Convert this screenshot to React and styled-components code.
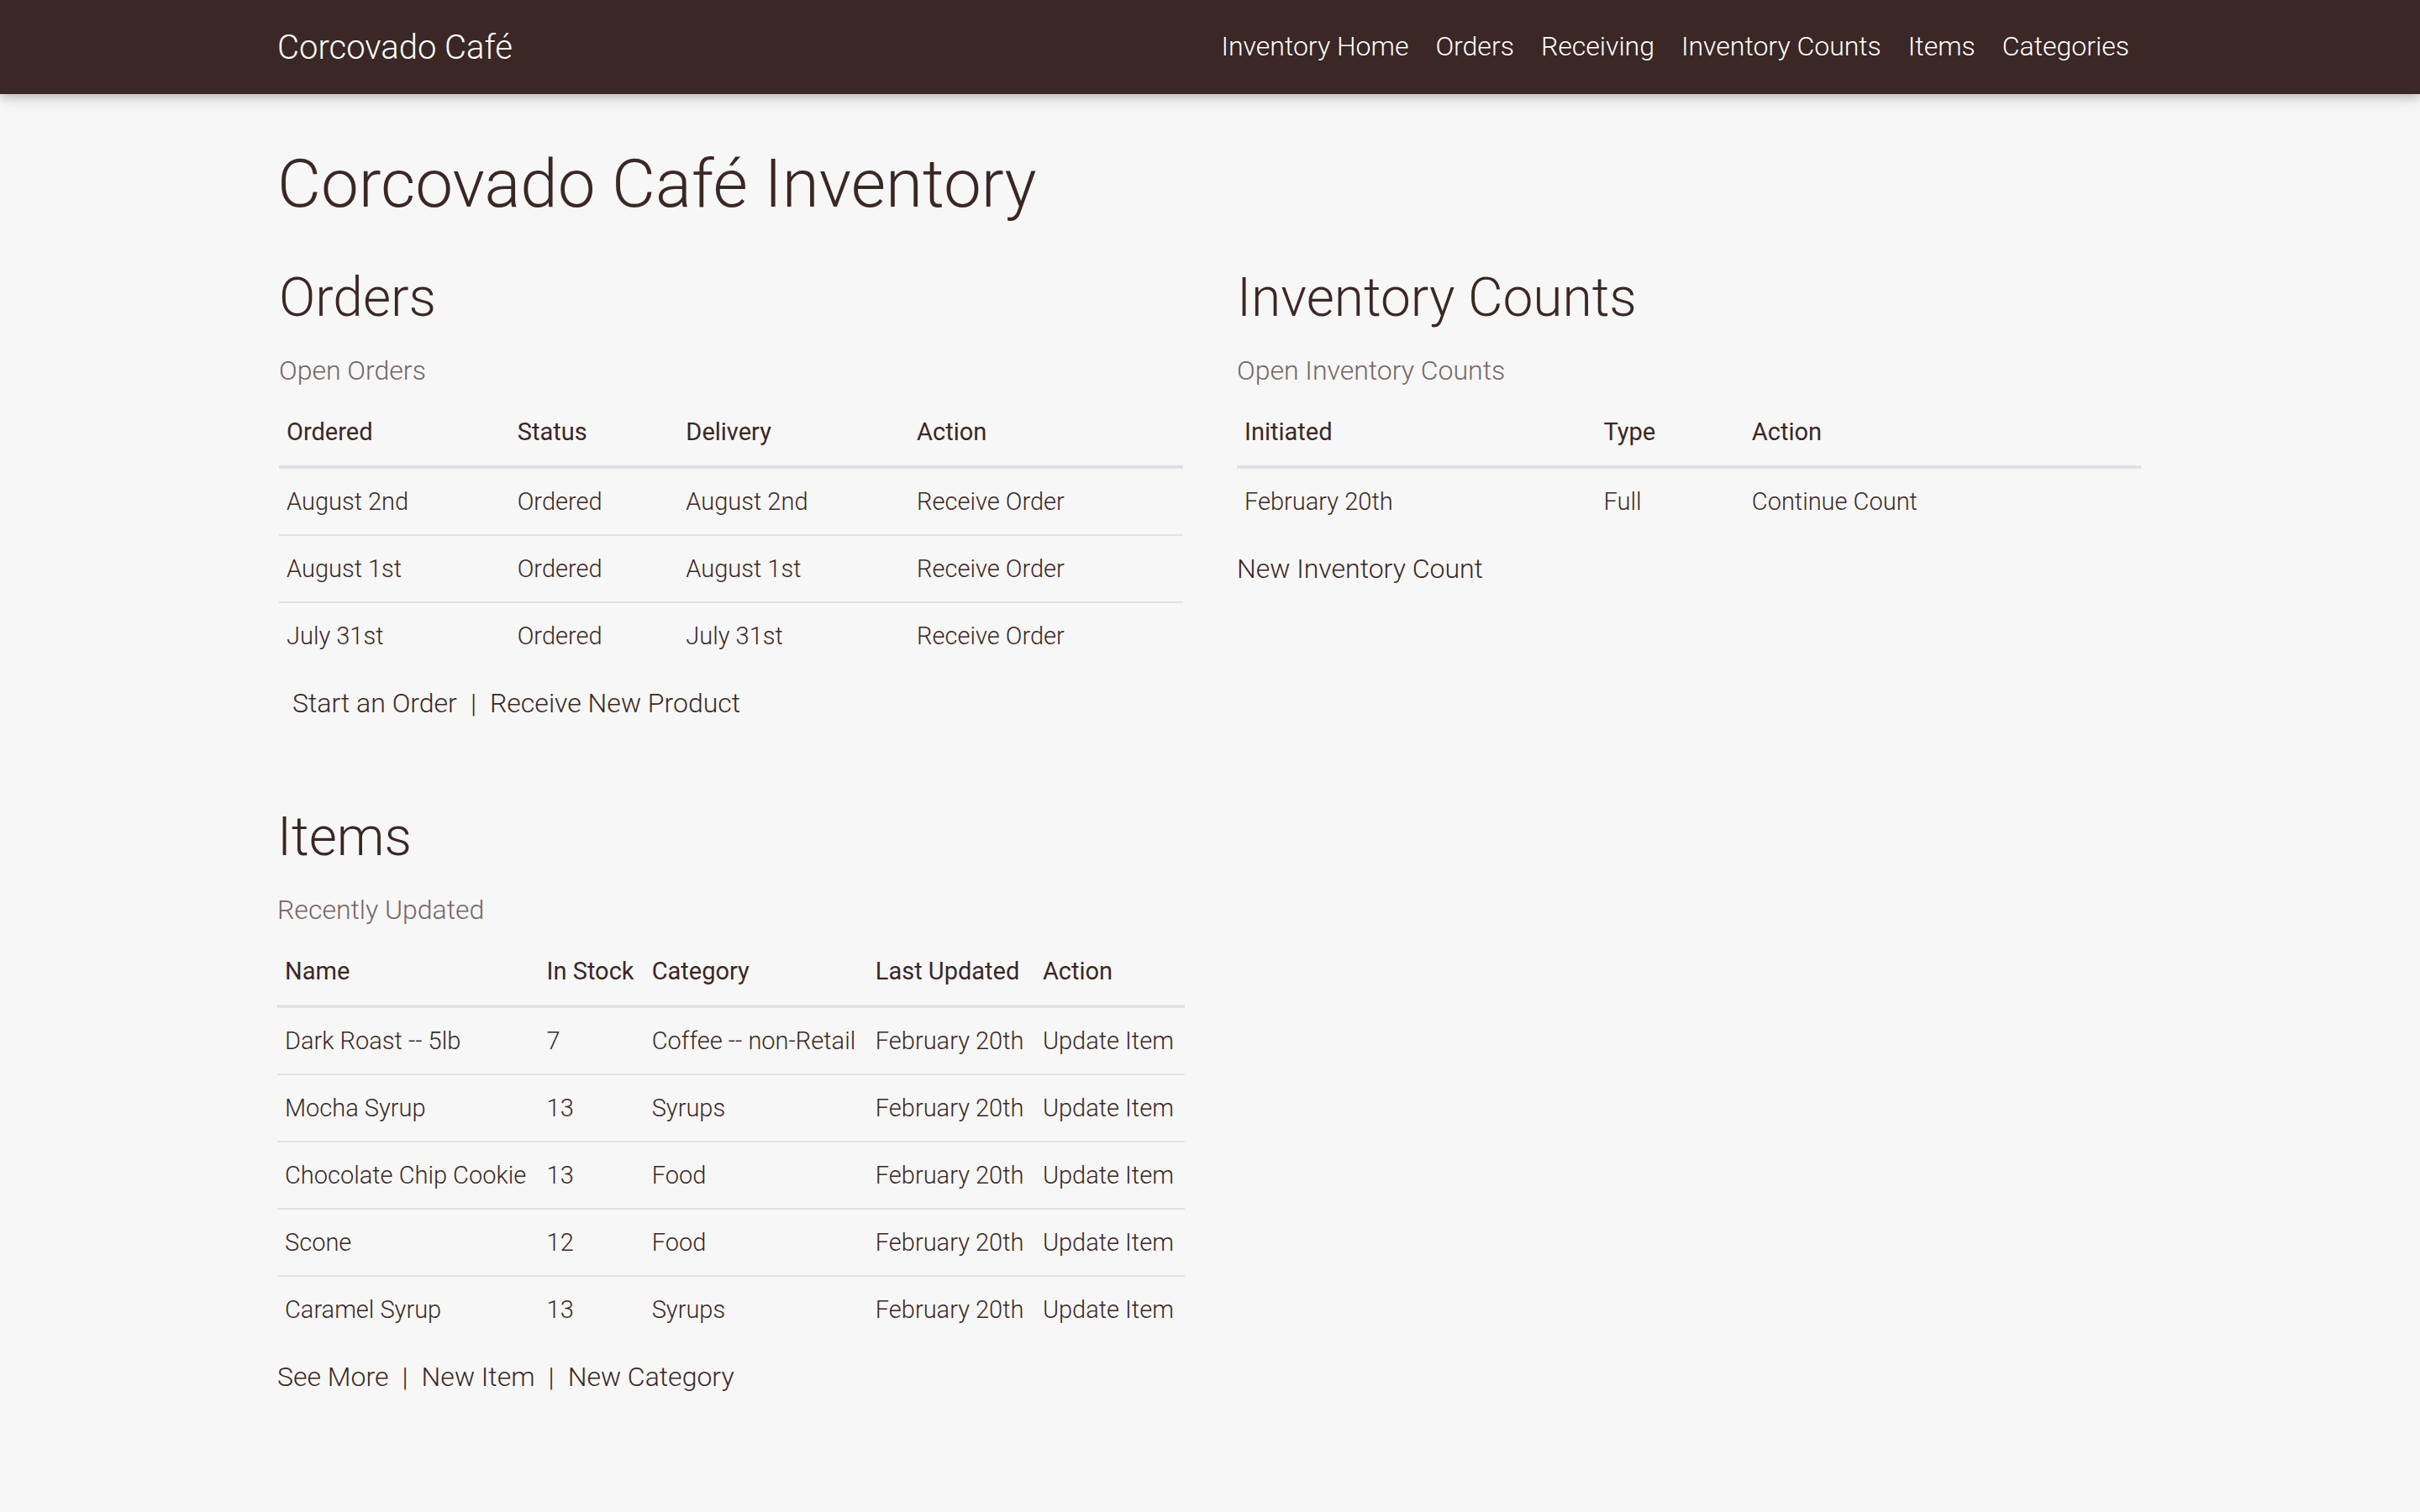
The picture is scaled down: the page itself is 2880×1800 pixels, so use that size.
import React from "react";
import styled, { createGlobalStyle } from "styled-components";

const brown = "#3b2725";
const line = "#dee2e6";

const GlobalStyle = createGlobalStyle`
  *, *::before, *::after { box-sizing: border-box; }
  body {
    margin: 0;
    background: #f7f7f7;
    color: ${brown};
    font-family: Roboto, "Liberation Sans", sans-serif;
    font-size: 32px;
    font-weight: 300;
    line-height: 48px;
  }
`;

const Navbar = styled.header`
  background: ${brown};
  box-shadow: 0 4px 10px rgba(0, 0, 0, 0.16), 0 4px 20px rgba(0, 0, 0, 0.12);
`;

const Container = styled.div`
  max-width: 2280px;
  margin: 0 auto;
  padding: 0 30px;
`;

const NavInner = styled(Container)`
  display: flex;
  align-items: center;
  justify-content: space-between;
  padding-top: 27px;
  padding-bottom: 25px;
`;

const Link = styled.a`
  color: inherit;
  text-decoration: none;
`;

const Brand = styled(Link)`
  color: #fff;
  font-size: 40px;
  line-height: 60px;
`;

const NavLinks = styled.nav`
  display: flex;
  gap: 32px;
  padding: 0 16px 4px 0;
  color: #fff;
`;

const Main = styled(Container).attrs({ as: "main" })`
  padding-top: 59px;
  padding-bottom: 64px;
`;

const PageTitle = styled.h1`
  margin: 0 0 49px;
  font-size: 80px;
  font-weight: 300;
  line-height: 96px;
`;

const Sections = styled.div`
  display: grid;
  grid-template-columns: repeat(2, minmax(0, 1fr));
  column-gap: 60px;
  row-gap: 97px;
`;

const Section = styled.section`
  padding: ${(p) => (p.$inset ? "0 2px" : "0")};
`;

const SectionTitle = styled.h2`
  margin: 0 0 24px;
  font-size: 64px;
  font-weight: 300;
  line-height: 77px;
`;

const Subtitle = styled.p`
  margin: 0 0 10px;
  color: #756663;
`;

const Table = styled.table`
  width: 100%;
  margin-bottom: 17px;
  border-collapse: separate;
  border-spacing: 0;
  font-size: 29px;
  line-height: 42px;
`;

const HeadCell = styled.th`
  padding: 18px 10px 19px 9px;
  border-bottom: 4px solid ${line};
  font-weight: 400;
  text-align: left;
`;

const Cell = styled.td`
  padding: 18px 10px 18px 9px;
  border-bottom: 2px solid ${line};

  tr:last-child > & {
    border-bottom: 0;
  }
`;

const Actions = styled.div`
  display: flex;
  gap: 16px;
  padding-left: ${(p) => (p.$indent ? "16px" : "0")};
`;

const navItems = ["Inventory Home", "Orders", "Receiving", "Inventory Counts", "Items", "Categories"];

const sections = [
  {
    title: "Orders",
    subtitle: "Open Orders",
    inset: true,
    indent: true,
    columns: ["Ordered", "Status", "Delivery", "Action"],
    rows: [
      ["August 2nd", "Ordered", "August 2nd", "Receive Order"],
      ["August 1st", "Ordered", "August 1st", "Receive Order"],
      ["July 31st", "Ordered", "July 31st", "Receive Order"],
    ],
    actions: ["Start an Order", "Receive New Product"],
  },
  {
    title: "Inventory Counts",
    subtitle: "Open Inventory Counts",
    inset: true,
    columns: ["Initiated", "Type", "Action"],
    rows: [["February 20th", "Full", "Continue Count"]],
    actions: ["New Inventory Count"],
  },
  {
    title: "Items",
    subtitle: "Recently Updated",
    columns: ["Name", "In Stock", "Category", "Last Updated", "Action"],
    rows: [
      ["Dark Roast -- 5lb", "7", "Coffee -- non-Retail", "February 20th", "Update Item"],
      ["Mocha Syrup", "13", "Syrups", "February 20th", "Update Item"],
      ["Chocolate Chip Cookie", "13", "Food", "February 20th", "Update Item"],
      ["Scone", "12", "Food", "February 20th", "Update Item"],
      ["Caramel Syrup", "13", "Syrups", "February 20th", "Update Item"],
    ],
    actions: ["See More", "New Item", "New Category"],
  },
];

function InventorySection({ title, subtitle, inset, indent, columns, rows, actions }) {
  return (
    <Section $inset={inset}>
      <SectionTitle>{title}</SectionTitle>
      <Subtitle>{subtitle}</Subtitle>
      <Table>
        <thead>
          <tr>
            {columns.map((c) => (
              <HeadCell key={c} scope="col">{c}</HeadCell>
            ))}
          </tr>
        </thead>
        <tbody>
          {rows.map((row) => (
            <tr key={row[0]}>
              {row.map((value, i) => (
                <Cell key={columns[i]}>
                  {i === row.length - 1 ? <Link href="#">{value}</Link> : value}
                </Cell>
              ))}
            </tr>
          ))}
        </tbody>
      </Table>
      <Actions $indent={indent}>
        {actions.map((a, i) => (
          <React.Fragment key={a}>
            {i > 0 && <span>|</span>}
            <Link href="#">{a}</Link>
          </React.Fragment>
        ))}
      </Actions>
    </Section>
  );
}

export default function App() {
  return (
    <>
      <GlobalStyle />
      <Navbar>
        <NavInner>
          <Brand href="#">Corcovado Café</Brand>
          <NavLinks>
            {navItems.map((n) => (
              <Link key={n} href="#">{n}</Link>
            ))}
          </NavLinks>
        </NavInner>
      </Navbar>
      <Main>
        <PageTitle>Corcovado Café Inventory</PageTitle>
        <Sections>
          {sections.map((s) => (
            <InventorySection key={s.title} {...s} />
          ))}
        </Sections>
      </Main>
    </>
  );
}
